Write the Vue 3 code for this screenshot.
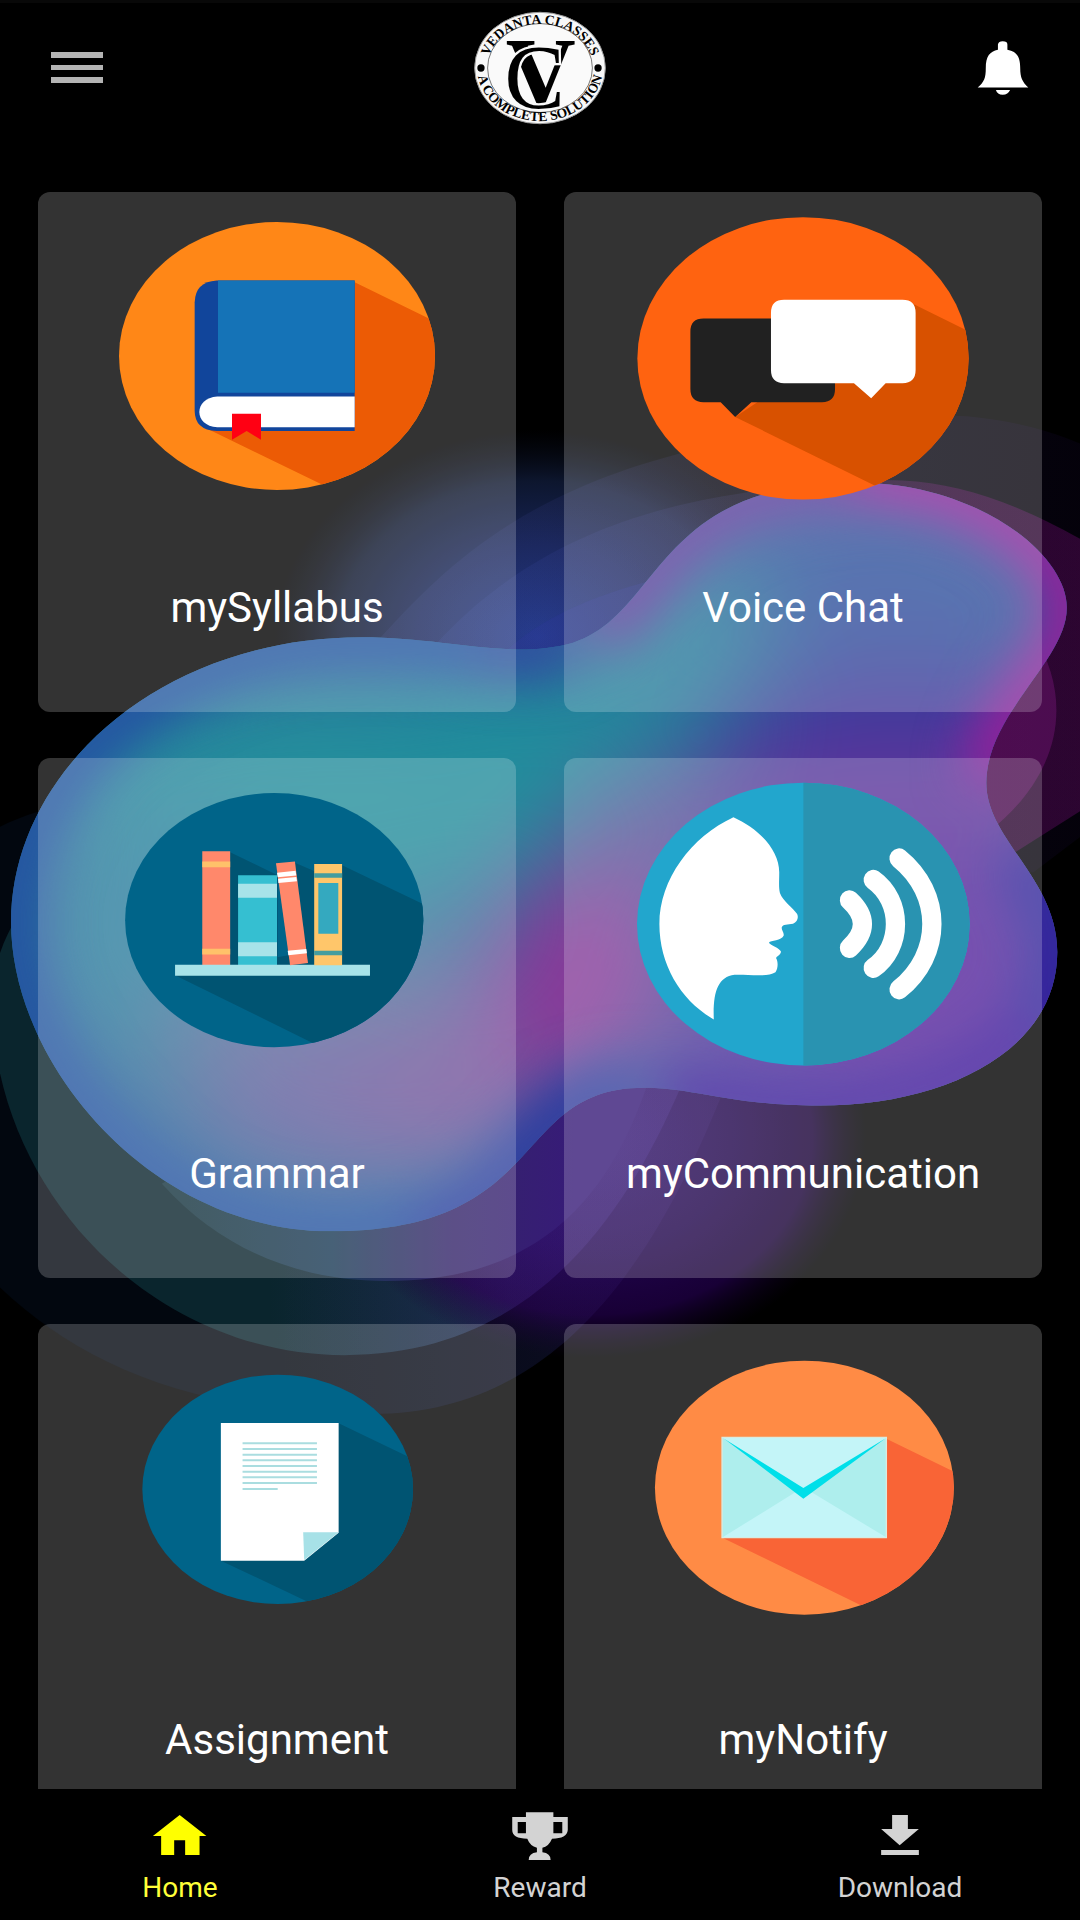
<template>
  <div class="app">
    <svg class="backdrop" viewBox="0 -603 1568 2895" preserveAspectRatio="none" aria-hidden="true">
      <defs>
        <clipPath id="blob-clip"><path :d="blob" /></clipPath>
        <filter id="soft" color-interpolation-filters="sRGB" x="-80%" y="-80%" width="260%" height="260%"><feGaussianBlur stdDeviation="72" /></filter>
        <filter id="edge" color-interpolation-filters="sRGB" x="-30%" y="-30%" width="160%" height="160%"><feGaussianBlur stdDeviation="38" /></filter>
        <radialGradient id="blue-glow">
          <stop offset="0" stop-color="#1d3582" />
          <stop offset=".45" stop-color="#162354" />
          <stop offset=".75" stop-color="#0d162e" />
          <stop offset="1" stop-color="#060a18" stop-opacity="0" />
        </radialGradient>
        <radialGradient id="violet-glow">
          <stop offset="0" stop-color="#2a0c62" />
          <stop offset=".5" stop-color="#20044c" />
          <stop offset=".8" stop-color="#180036" />
          <stop offset="1" stop-color="#0c001c" stop-opacity="0" />
        </radialGradient>
        <linearGradient id="ring" x1="0" x2="1" y1="0" y2="0">
          <stop offset="0" stop-color="#5060c0" stop-opacity=".1" />
          <stop offset=".5" stop-color="#4a40a0" stop-opacity=".12" />
          <stop offset="1" stop-color="#4010a0" stop-opacity=".06" />
        </linearGradient>
        <linearGradient id="ring-pink" x1="0" x2="1" y1="0" y2="0">
          <stop offset="0" stop-color="#4058c0" stop-opacity=".12" />
          <stop offset=".45" stop-color="#5048a0" stop-opacity=".14" />
          <stop offset=".75" stop-color="#a010a0" stop-opacity=".24" />
          <stop offset="1" stop-color="#a010a0" stop-opacity=".26" />
        </linearGradient>
        <linearGradient id="veil" x1="0" x2="1" y1="0" y2="0">
          <stop offset=".4" stop-color="#6040c0" stop-opacity="0" />
          <stop offset=".75" stop-color="#6040c0" stop-opacity=".18" />
        </linearGradient>
        <linearGradient id="inner-ring" x1="0" x2="1" y1="0" y2="0">
          <stop offset=".05" stop-color="#15343f" />
          <stop offset=".35" stop-color="#1a3a55" />
          <stop offset=".6" stop-color="#34246a" />
          <stop offset=".85" stop-color="#371b78" />
        </linearGradient>
      </defs>

      <path fill="#02070f" d="M-60 690C-20 640 40 620 120 600L1100 900C1000 1200 860 1528 540 1528C230 1528 60 1420-60 1270Z" />
      <path fill="#0a252d" d="M200 600C60 700-10 800-12 900C-12 1190 220 1439 500 1439C760 1439 900 1250 990 1030L900 800Z" />
      <ellipse cx="780" cy="355" rx="385" ry="315" fill="url(#blue-glow)" />
      <ellipse cx="860" cy="1110" rx="400" ry="335" fill="url(#violet-glow)" />
      <path fill="url(#veil)" fill-opacity=".5" d="M-60 690L1100 900C1000 1200 860 1528 540 1528C230 1528 60 1420-60 1270Z" />
      <path fill="url(#veil)" d="M-12 900C-12 1190 220 1439 500 1439C760 1439 900 1250 990 1030L900 800Z" />
      <path fill="url(#inner-ring)" d="M235 1180C330 1290 450 1327 560 1327C800 1327 890 1180 940 1030L700 900Z" />
      <path fill="url(#ring)" d="M540 370C650 240 760 140 984 78C1110 40 1250 16 1404 21C1500 30 1570 58 1640 100V600L1500 710L1200 700Z" />
      <path fill="url(#ring-pink)" d="M620 380C720 260 860 170 1079 137C1150 122 1250 116 1310 118C1410 124 1500 160 1640 250V570L1470 682L1200 650Z" />
      <path fill="#3038a0" fill-opacity=".25" d="M730 380C780 330 850 295 950 268L1050 350Z" />
      <path fill="#a020a0" fill-opacity=".28" d="M1500 350C1560 450 1540 560 1440 645L1300 500Z" />

      <g clip-path="url(#blob-clip)">
        <rect x="0" y="80" width="1568" height="1200" fill="#2c6c9a" />
        <g filter="url(#soft)">
          <ellipse cx="470" cy="600" rx="400" ry="170" fill="#248f9c" />
          <ellipse cx="240" cy="800" rx="190" ry="200" fill="#2b7f9e" />
          <ellipse cx="760" cy="500" rx="230" ry="100" fill="#208d9c" />
          <ellipse cx="1290" cy="300" rx="290" ry="170" fill="#30509d" />
          <ellipse cx="1010" cy="350" rx="120" ry="110" fill="#27809c" />
          <ellipse cx="1310" cy="490" rx="260" ry="80" fill="#40339b" />
          <ellipse cx="1280" cy="620" rx="330" ry="110" fill="#60389b" />
          <ellipse cx="1330" cy="880" rx="300" ry="220" fill="#55269d" />
          <ellipse cx="470" cy="940" rx="240" ry="150" fill="#56759c" />
          <ellipse cx="570" cy="1050" rx="290" ry="130" fill="#655e9e" />
          <ellipse cx="840" cy="860" rx="130" ry="230" fill="#8c3899" transform="rotate(22 840 860)" />
          <ellipse cx="660" cy="1040" rx="150" ry="90" fill="#76549b" />
          <ellipse cx="940" cy="660" rx="110" ry="100" fill="#60509a" />
          <ellipse cx="1150" cy="980" rx="200" ry="70" fill="#5c229b" />
        </g>
        <g class="edges" filter="url(#edge)">
          <path stroke="#2450a3" d="M745 375C680 365 600 357 525 357C230 357 16 560 16 785C16 1000 220 1253 480 1253C650 1253 720 1190 760 1130" />
          <path stroke="#2a3aa0" d="M600 1265C790 1200 750 1036 935 1036" />
          <path stroke="#3c159a" d="M960 1040C1010 1036 1060 1063 1190 1063C1370 1063 1500 980 1530 880" />
          <path stroke="#2c259c" d="M1470 680C1500 720 1535 760 1535 830C1535 880 1520 910 1500 940" />
          <path stroke="#324aa0" d="M700 372C760 378 800 372 832 363" />
          <path stroke="#66369d" d="M860 345C960 290 960 124 1240 122" />
          <path stroke="#9c1d9b" d="M1240 112C1430 112 1560 230 1560 315C1560 390 1445 470 1445 575" />
        </g>
      </g>
    </svg>

    <header class="topbar">
      <button class="icon-btn" type="button" aria-label="Menu">
        <svg width="52" height="32" viewBox="0 0 52 32" fill="#b4b4b4">
          <path d="M0 0H52V6H0ZM0 13H52V18H0ZM0 25H52V31H0Z" />
        </svg>
      </button>

      <svg class="logo" viewBox="40 36 404 340" role="img" aria-label="Vedanta Classes, a complete solution">
        <defs>
          <path id="ring-top" d="M82 224A161 136 0 1 1 402 224" />
          <path id="ring-bottom" d="M52 204A190 162 0 0 0 432 204" />
        </defs>
        <ellipse cx="242" cy="206" rx="197" ry="168" fill="#f8f8f8" stroke="#999" stroke-width="3" />
        <ellipse cx="242" cy="206" rx="158" ry="134" fill="#fafafa" stroke="#333" stroke-width="2" />
        <circle cx="64" cy="206" r="11" />
        <circle cx="417" cy="206" r="11" />
        <text class="logo__ring"><textPath href="#ring-top" startOffset="50%">VEDANTA CLASSES</textPath></text>
        <text class="logo__ring"><textPath href="#ring-bottom" startOffset="50%">A COMPLETE SOLUTION</textPath></text>
        <text class="logo__v" x="244" y="317">V</text>
        <text class="logo__c" x="226" y="326">C</text>
      </svg>

      <button class="icon-btn" type="button" aria-label="Notifications">
        <svg width="52" height="54" viewBox="1417 125 77 159" preserveAspectRatio="none" fill="#fff">
          <path d="M1418 262C1428 245 1430 232 1430 205C1430 170 1436 156 1448 151V135Q1449 126 1455 126Q1462 126 1462 135V151C1476 156 1481 172 1481 205C1481 232 1484 245 1493 262ZM1445 269H1466Q1463 283 1455 283Q1447 283 1445 269Z" />
        </svg>
      </button>
    </header>

    <main class="grid">
      <a v-for="card in cards" :key="card.id" class="card" href="#">
        <svg class="card__icon" :viewBox="card.box" preserveAspectRatio="none" aria-hidden="true">
          <template v-if="card.id === 'syllabus'">
            <clipPath id="c-syllabus"><ellipse cx="771" cy="511" rx="474" ry="389" /></clipPath>
            <ellipse cx="771" cy="511" rx="474" ry="389" fill="#ff8717" />
            <path clip-path="url(#c-syllabus)" fill="#ec5b05" d="M1004 297L1300 437V900H940L565 724L800 500Z" />
            <path fill="#11459b" d="M590 292H1004V729H590Q524 726 524 670V355Q526 296 590 292Z" />
            <path fill="#1573b7" d="M594 292H1004V618H594Z" />
            <path fill="#fff" d="M1004 629H592C520 633 520 715 592 718H1004Z" />
            <path fill="#ff0013" d="M636 679H723V754L680 729L636 754Z" />
          </template>

          <template v-else-if="card.id === 'voice'">
            <clipPath id="c-voice"><ellipse cx="764" cy="518" rx="481" ry="410" /></clipPath>
            <ellipse cx="764" cy="518" rx="481" ry="410" fill="#ff6310" />
            <path clip-path="url(#c-voice)" fill="#d85100" d="M1080 358L1300 467V940H1080L567 688L850 500Z" />
            <path fill="#212121" d="M475 402H819Q857 402 857 440V607Q857 645 819 645H614L567 688L525 645H475Q437 645 437 607V440Q437 402 475 402Z" />
            <path fill="#fff" d="M709 348H1053Q1091 348 1091 386V552Q1091 590 1053 590H1004L962 634L912 590H709Q671 590 671 552V386Q671 348 709 348Z" />
          </template>

          <template v-else-if="card.id === 'grammar'">
            <clipPath id="c-grammar"><ellipse cx="796" cy="504" rx="433" ry="356" /></clipPath>
            <ellipse cx="796" cy="504" rx="433" ry="356" fill="#006489" />
            <g clip-path="url(#c-grammar)" fill="#005472">
              <path d="M668 314L806 378V640H668ZM856 343L920 370V630H856ZM993 350L1260 474V900H1000L912 850L508 658L850 600L912 500Z" />
            </g>
            <path fill="#ff886b" d="M587 311H668V630H587Z" />
            <path fill="#ffc16a" d="M587 340H668V356H587ZM587 584H668V600H587Z" />
            <path fill="#35bfd1" d="M691 378H804V630H691Z" />
            <path fill="#a7e3e9" d="M691 402H804V441H691ZM691 566H804V605H691ZM508 629H1074V660H508Z" />
            <path fill="#ff886b" d="M801 345L856 340L894 624L842 630Z" />
            <path fill="#fff" d="M804 371L858 366L860 379L806 384ZM807 388L860 383L862 395L808 400ZM835 590L889 585L891 597L837 602Z" />
            <path fill="#ffc66a" d="M912 347H993V630H912Z" />
            <path fill="#34a9bf" d="M924 400H982V542H924Z" />
            <path fill="#449d9f" d="M912 373H993V385H912ZM912 590H993V602H912Z" />
          </template>

          <template v-else-if="card.id === 'communication'">
            <ellipse cx="765" cy="515" rx="483" ry="396" fill="#22a6cd" />
            <path fill="#2993b1" d="M765 119A483 396 0 0 1 765 911Z" />
            <path fill="#fff" d="M562 216C640 250 695 310 695 370C695 395 693 412 697 428C705 450 735 470 747 487C752 497 747 510 735 514C720 517 705 514 702 525C702 532 709 538 708 547C702 562 670 560 665 567C670 575 695 580 700 592C700 602 686 605 686 611C692 620 692 640 684 650C660 665 600 655 565 657C515 663 502 710 505 782C410 730 347 630 347 515C347 390 440 270 562 216Z" />
            <path fill="none" stroke="#fff" stroke-width="56" stroke-linecap="round" d="M899 448Q974 515 899 582M968 391C1054 450 1054 580 968 638M1043 331C1170 430 1170 600 1043 698" />
          </template>

          <template v-else-if="card.id === 'assignment'">
            <clipPath id="c-assignment"><ellipse cx="806" cy="628" rx="393" ry="344" /></clipPath>
            <ellipse cx="806" cy="628" rx="393" ry="344" fill="#006489" />
            <path clip-path="url(#c-assignment)" fill="#005472" d="M983 430L1240 557V1000H964L641 842L900 700Z" />
            <path fill="#fff" d="M641 429H983V758L883 842H641Z" />
            <path fill="#a7e1e7" d="M880 757H983L883 840Z" />
            <path stroke="#aadde0" stroke-width="6" d="M704 490H920M704 507H920M704 524H920M704 541H920M704 558H920M704 575H920M704 592H920M704 609H920M704 627H806" />
          </template>

          <template v-else>
            <clipPath id="c-notify"><ellipse cx="768" cy="623" rx="434" ry="381" /></clipPath>
            <ellipse cx="768" cy="623" rx="434" ry="381" fill="#ff8b45" />
            <path clip-path="url(#c-notify)" fill="#f96436" d="M1006 476L1240 594V1010H1000L530 773L900 700Z" />
            <path fill="#aeeeed" stroke="#d8ebe0" stroke-width="4" d="M529 472H1006V773H529Z" />
            <path fill="#c4f5f8" d="M532 474H1004L768 630ZM532 771L765 622L1004 771Z" />
            <path fill="#00dfe9" d="M535 476L765 624L1002 476L765 656Z" />
          </template>
        </svg>
        <span class="card__label">{{ card.label }}</span>
      </a>
    </main>

    <nav class="tabs">
      <a v-for="tab in tabs" :key="tab.label" :class="['tab', { 'tab--active': tab.active }]" href="#">
        <svg width="72" height="54" :viewBox="tab.box" preserveAspectRatio="none" fill="currentColor" fill-rule="evenodd" aria-hidden="true">
          <path :d="tab.path" />
        </svg>
        <span class="tab__label">{{ tab.label }}</span>
      </a>
    </nav>
  </div>
</template>

<script setup>
const blob =
  "M16 785C16 560 230 355 525 355C650 355 740 390 832 363C960 320 950 121 1240 121" +
  "C1420 121 1549 230 1549 310C1549 390 1432 470 1432 575C1432 660 1535 720 1535 830" +
  "C1535 980 1370 1062 1190 1062C1060 1062 1010 1035 935 1035C740 1035 800 1252 480 1252" +
  "C220 1252 16 1000 16 785Z";

const cards = [
  { id: "syllabus",      label: "mySyllabus",      box: "54 35 1434 987" },
  { id: "voice",         label: "Voice Chat",      box: "70 35 1388 987" },
  { id: "grammar",       label: "Grammar",         box: "110 50 1388 952" },
  { id: "communication", label: "myCommunication", box: "70 50 1388 952" },
  { id: "assignment",    label: "Assignment",      box: "110 132 1388 1020" },
  { id: "notify",        label: "myNotify",        box: "70 132 1388 1020" },
];

const tabs = [
  {
    label: "Home",
    active: true,
    box: "209 87 105 162",
    path: "M222 168L261 105L300 168H290V225H269V181H253V225H234V168Z",
  },
  {
    label: "Reward",
    box: "732 87 105 162",
    path: "M764 97H804V111H825V150Q824 176 802 176Q797 200 788 203V217Q800 220 800 240H768Q768 220 780 217V203Q770 198 766 176Q744 176 744 150V111H764ZM752 126V160H764V126ZM804 126V160H817V126Z",
  },
  {
    label: "Download",
    box: "1254 87 105 162",
    path: "M1295 105H1318V147H1334L1306 196L1279 147H1295ZM1279 210H1334V225H1279Z",
  },
];
</script>

<style>
body { background: #000; }
</style>

<style scoped>
.app {
  position: relative; height: 100vh; overflow: hidden;
  display: flex; flex-direction: column; box-sizing: border-box;
  border-top: 3px solid #080808; background: #000; color: #fff;
  font-family: Roboto, "Noto Sans", sans-serif;
}
.backdrop { position: absolute; inset: 0; width: 100%; height: 100%; }
.edges path { fill: none; stroke-width: 84; }

.topbar {
  position: relative; display: flex; align-items: center;
  justify-content: space-between; padding: 8px 51px;
}
.icon-btn { display: flex; padding: 0; border: 0; background: none; cursor: pointer; }
.logo { width: 134px; height: 114px; overflow: visible; }
.logo text { font-family: "Liberation Serif", serif; text-anchor: middle; fill: #000; }
.logo .logo__ring { font-size: 41px; font-weight: 700; }
.logo .logo__v { font-size: 292px; font-weight: 700; }
.logo .logo__c { font-size: 272px; stroke: #fafafa; stroke-width: 14px; paint-order: stroke; }

.grid {
  position: relative; flex: 1; min-height: 0; overflow-y: auto; scrollbar-width: none;
  display: grid; grid-template-columns: 1fr 1fr; grid-auto-rows: max-content;
  gap: 46px 48px; padding: 59px 38px 46px;
}
.card {
  display: flex; flex-direction: column; align-items: center;
  min-height: 520px; border-radius: 12px;
  background: rgba(255,255,255,.2); color: #fff; text-decoration: none;
}
.card__icon { width: 100%; aspect-ratio: 478 / 340; }
.card__label { margin-top: 52px; font-size: 42px; line-height: 48px; }

.tabs { position: relative; display: flex; background: #000; padding: 20px 0 16px; }
.tab {
  flex: 1; display: flex; flex-direction: column; align-items: center; gap: 8px;
  color: #d3d3d3; text-decoration: none;
}
.tab--active { color: #ff0; }
.tab__label { font-size: 28px; line-height: 33px; }
.tab--active .tab__label { color: #ffff38; }
</style>
